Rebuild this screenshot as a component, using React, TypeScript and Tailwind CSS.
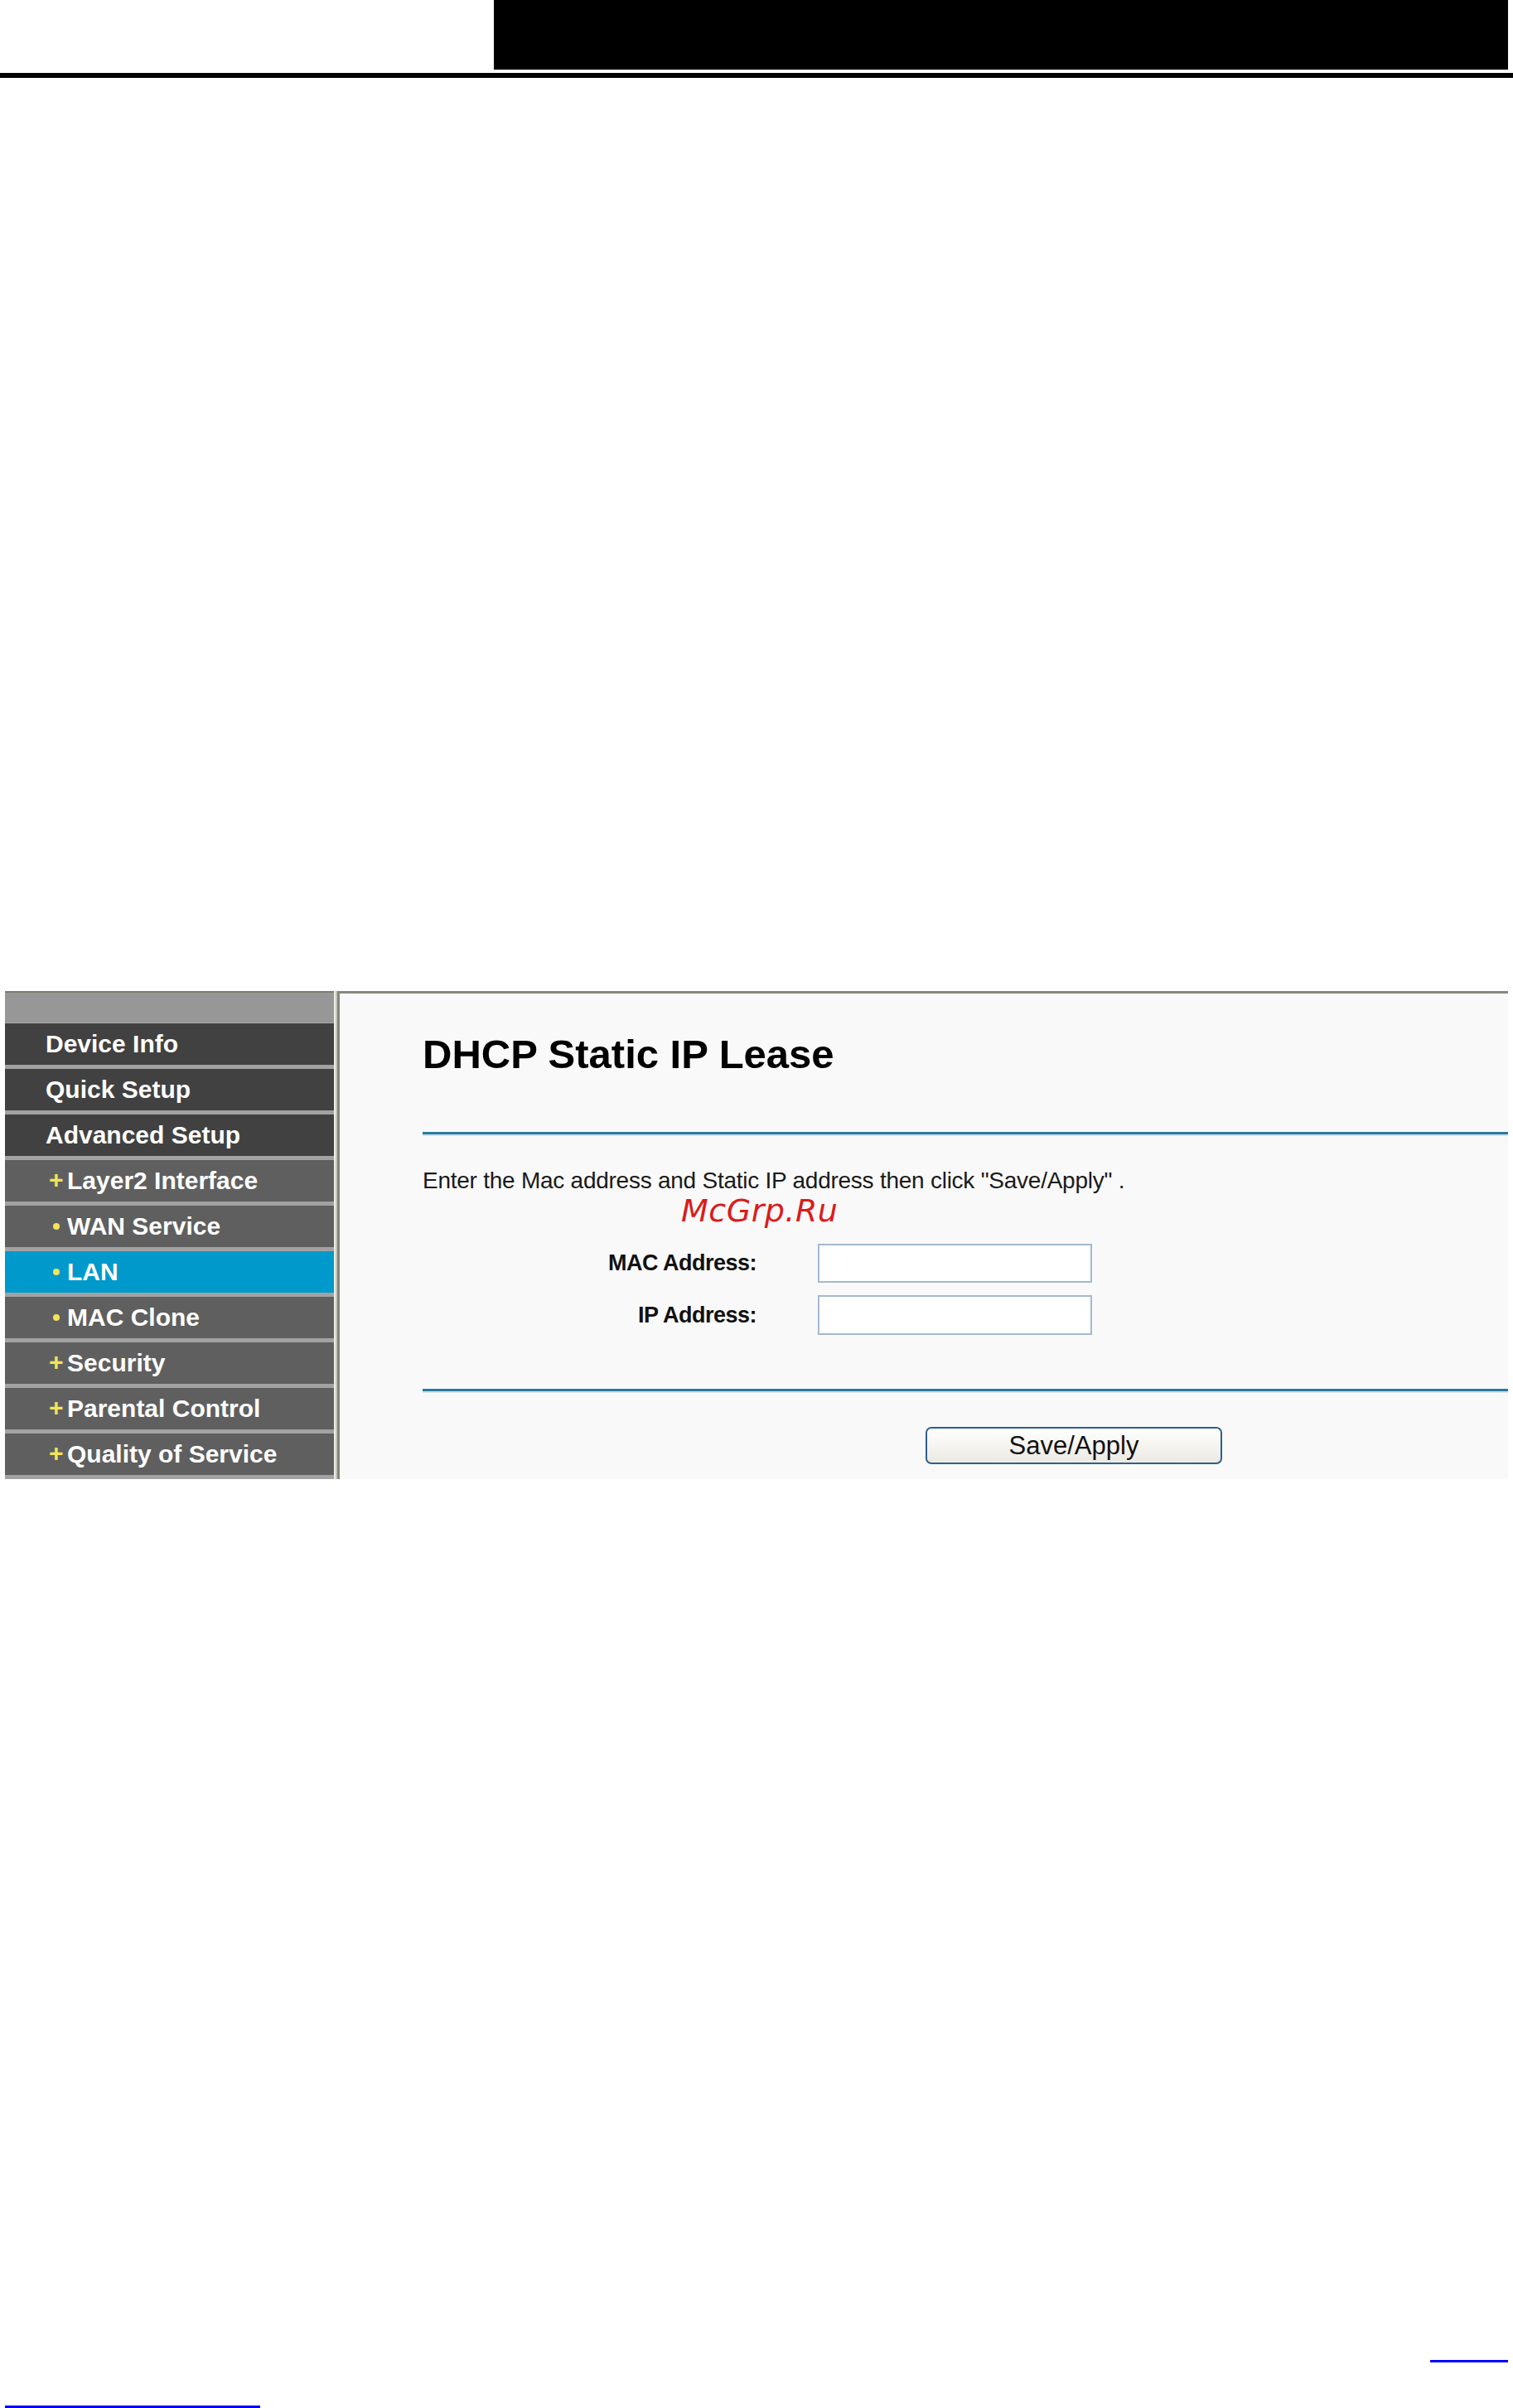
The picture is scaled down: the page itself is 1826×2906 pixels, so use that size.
import React from "react";

type Item = { label: string; kind: "main" | "plus" | "dot"; active?: boolean };

const items: Item[] = [
  { label: "Device Info", kind: "main" },
  { label: "Quick Setup", kind: "main" },
  { label: "Advanced Setup", kind: "main" },
  { label: "Layer2 Interface", kind: "plus" },
  { label: "WAN Service", kind: "dot" },
  { label: "LAN", kind: "dot", active: true },
  { label: "MAC Clone", kind: "dot" },
  { label: "Security", kind: "plus" },
  { label: "Parental Control", kind: "plus" },
  { label: "Quality of Service", kind: "plus" },
];

function MenuRow({ item }: { item: Item }) {
  const bg =
    item.kind === "main"
      ? "bg-[#414141]"
      : item.active
      ? "bg-[#0099cc]"
      : "bg-[#5f5f5f]";
  return (
    <div className="border-b-[5px] border-[#a2a2a2]">
      <div
        className={`${bg} h-[50px] flex items-center text-white font-bold text-[30px] leading-none ${
          item.kind === "main" ? "pl-[49px]" : "pl-[53px]"
        }`}
      >
        {item.kind === "plus" && (
          <span className="w-[22px] flex items-center text-[#f3e35a] text-[30px] font-bold leading-none -mt-[2px]">
            +
          </span>
        )}
        {item.kind === "dot" && (
          <span className="w-[22px] flex items-center pl-[5px]">
            <span className="block w-[8px] h-[8px] rounded-full bg-[#f3e35a]" />
          </span>
        )}
        <span className="whitespace-nowrap">{item.label}</span>
      </div>
    </div>
  );
}

export default function App() {
  return (
    <div
      className="relative w-[1826px] h-[2906px] bg-white overflow-hidden"
      style={{ fontFamily: '"Liberation Sans", Arial, sans-serif' }}
    >
      {/* header */}
      <div className="flex h-[84px]">
        <div className="w-[596px]" />
        <div className="w-[1224px] bg-black" />
      </div>
      <div className="mt-[4px] h-[6px] bg-black" />

      {/* main UI */}
      <div className="mt-[1102px] ml-[6px] w-[1814px] flex">
        {/* sidebar */}
        <div className="w-[397px] flex flex-col">
          <div className="h-[2px] bg-[#7c7c72]" />
          <div className="h-[37px] bg-[#979797] border-b border-[#a8a8a8]" />
          {items.map((it) => (
            <MenuRow key={it.label} item={it} />
          ))}
        </div>
        {/* divider */}
        <div className="w-[7px] flex">
          <div className="w-[2px] bg-[#efefe6]" />
          <div className="w-[2px] bg-[#c4c4bc]" />
          <div className="w-[3px] bg-[#86867c]" />
        </div>
        {/* panel */}
        <div className="flex-1 bg-[#f9f9f9] border-t-[3px] border-[#88887e] pl-[100px] pt-[49px] flex flex-col">
          <div className="text-[49px] leading-[49px] font-bold text-black whitespace-nowrap">
            DHCP Static IP Lease
          </div>
          <div className="mt-[69px] h-[3px] bg-[#2a7aa0]" />
          <div className="h-[2px] bg-[#d2e2ea]" />
          <div className="mt-[40px] text-[28px] leading-[28px] tracking-[-0.25px] text-[#1a1a1a] whitespace-nowrap">
            Enter the Mac address and Static IP address then click "Save/Apply" .
          </div>
          <div className="mt-[62px] grid grid-cols-[403px_331px] gap-x-[74px] gap-y-[15px] items-center">
            <div className="text-right font-bold text-[27px] leading-none tracking-[-0.5px] text-[#111]">
              MAC Address:
            </div>
            <div className="h-[47px] bg-white border-2 border-[#a5b9cf]" />
            <div className="text-right font-bold text-[27px] leading-none tracking-[-0.5px] text-[#111]">
              IP Address:
            </div>
            <div className="h-[48px] bg-white border-2 border-[#a5b9cf]" />
          </div>
          <div className="mt-[65px] h-[3px] bg-[#2a7aa0]" />
          <div className="h-[2px] bg-[#d2e2ea]" />
          <div className="mt-[41px] pl-[607px] pb-[17px]">
            <div className="w-[358px] h-[45px] rounded-[7px] border-2 border-[#2f5f8e] bg-gradient-to-b from-white to-[#ebe9e1] flex items-center justify-center text-[31px] leading-none text-[#111]">
              Save/Apply
            </div>
          </div>
        </div>
      </div>

      {/* link underlines */}
      <div className="mt-[1063px] flex justify-end pr-[6px]">
        <div className="w-[94px] h-[3px] bg-[#0000ff]" />
      </div>
      <div className="mt-[52px] ml-[6px] w-[308px] h-[3px] bg-[#0000ff]" />

      {/* watermark */}
      <div
        className="absolute left-[822px] top-[1446px] text-[38px] leading-[30px] italic text-[#d91c1c] whitespace-nowrap tracking-[0.5px]"
        style={{ fontFamily: '"DejaVu Sans", Verdana, sans-serif' }}
      >
        McGrp.Ru
      </div>
    </div>
  );
}
